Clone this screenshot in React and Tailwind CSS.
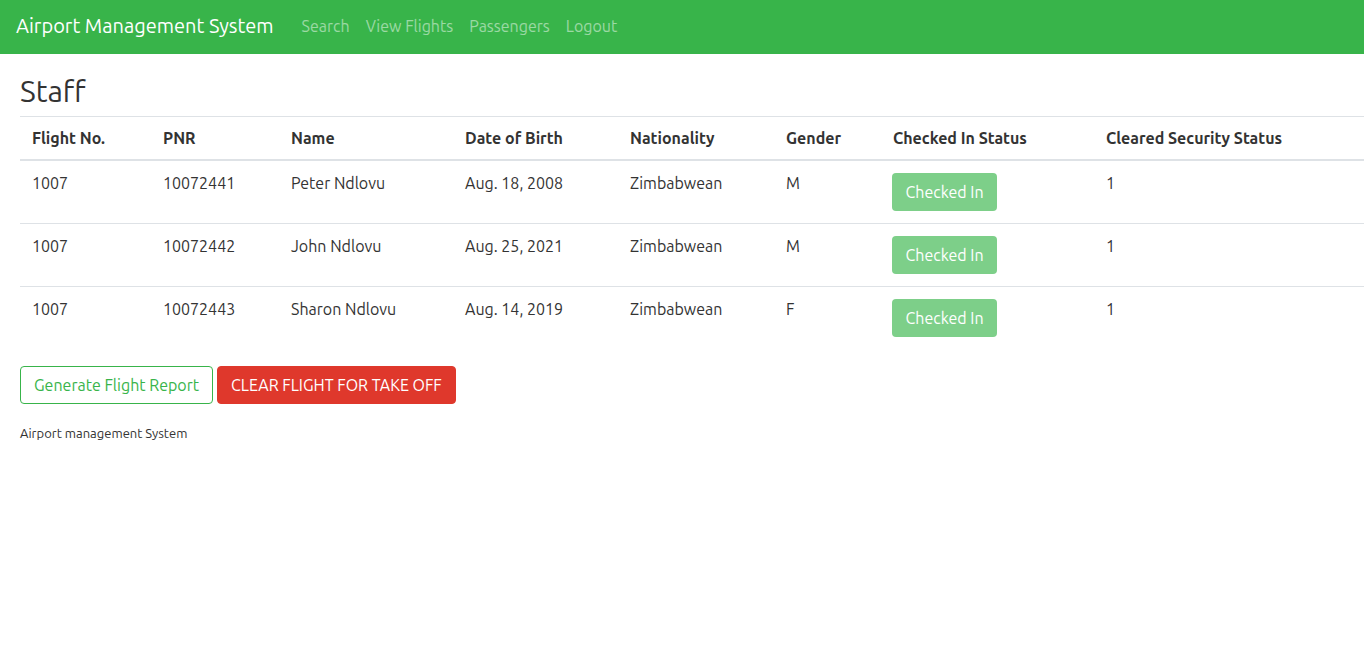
import { useState } from "react";

const passengers = [
  { flight: "1007", pnr: "10072441", name: "Peter Ndlovu", dob: "Aug. 18, 2008", nat: "Zimbabwean", gender: "M", cleared: "1" },
  { flight: "1007", pnr: "10072442", name: "John Ndlovu", dob: "Aug. 25, 2021", nat: "Zimbabwean", gender: "M", cleared: "1" },
  { flight: "1007", pnr: "10072443", name: "Sharon Ndlovu", dob: "Aug. 14, 2019", nat: "Zimbabwean", gender: "F", cleared: "1" },
];

const App = () => {
  const [active] = useState("Staff")
  return (
    <div className="min-h-[653px] bg-white text-[#333] font-['Ubuntu','Open_Sans','Noto_Sans',sans-serif] text-base">
      <nav className="h-[54px] bg-[#38b44a] flex items-center px-4 pb-[2px]">
        <a className="text-white text-xl mr-[20px]">Airport Management System</a>
        <div className="flex">
          {["Search", "View Flights", "Passengers", "Logout"].map((l) => (
            <a key={l} className="px-2 text-white/50">{l}</a>
          ))}
        </div>
      </nav>

      <div className="pl-5">
        <h2 className="text-[30px] leading-[1.2] mt-[19px] mb-[7px]">{active}</h2>
        <table className="w-full border-collapse text-left">
          <thead>
            <tr className="border-t border-[#dee2e6]">
              <th className="w-[131px] px-3 pt-[9px] pb-[9px] border-b-2 border-[#dee2e6] font-bold">Flight No.</th>
              <th className="w-[128px] px-3 pt-[9px] pb-[9px] border-b-2 border-[#dee2e6] font-bold">PNR</th>
              <th className="w-[174px] px-3 pt-[9px] pb-[9px] border-b-2 border-[#dee2e6] font-bold">Name</th>
              <th className="w-[165px] px-3 pt-[9px] pb-[9px] border-b-2 border-[#dee2e6] font-bold">Date of Birth</th>
              <th className="w-[156px] px-3 pt-[9px] pb-[9px] border-b-2 border-[#dee2e6] font-bold">Nationality</th>
              <th className="w-[107px] px-3 pt-[9px] pb-[9px] border-b-2 border-[#dee2e6] font-bold">Gender</th>
              <th className="w-[213px] px-3 pt-[9px] pb-[9px] border-b-2 border-[#dee2e6] font-bold">Checked In Status</th>
              <th className="px-3 pt-[9px] pb-[9px] border-b-2 border-[#dee2e6] font-bold">Cleared Security Status</th>
            </tr>
          </thead>
          <tbody>
            {passengers.map((p) => (
              <tr key={p.pnr} className="border-t border-[#dee2e6] align-top">
                <td className="px-3 pt-[10px] pb-[12px]">{p.flight}</td>
                <td className="px-3 pt-[10px] pb-[12px]">{p.pnr}</td>
                <td className="px-3 pt-[10px] pb-[12px]">{p.name}</td>
                <td className="px-3 pt-[10px] pb-[12px]">{p.dob}</td>
                <td className="px-3 pt-[10px] pb-[12px]">{p.nat}</td>
                <td className="px-3 pt-[10px] pb-[12px]">{p.gender}</td>
                <td className="px-3 pt-[10px] pb-[12px]">
                  <button className="bg-[#7dcf89] text-white rounded w-[105px] h-[38px] mt-[2px] -ml-px block">Checked In</button>
                </td>
                <td className="px-3 pt-[10px] pb-[12px]">{p.cleared}</td>
              </tr>
            ))}
          </tbody>
        </table>

        <div className="flex gap-1 mt-[17px]">
          <button className="h-[38px] px-[13px] border border-[#38b44a] text-[#38b44a] rounded">Generate Flight Report</button>
          <button className="h-[38px] px-[13px] border border-[#df382c] bg-[#df382c] text-white rounded">CLEAR FLIGHT FOR TAKE OFF</button>
        </div>
        <p className="text-[13px] mt-5">Airport management System</p>
      </div>
    </div>
  );
};

export default App
